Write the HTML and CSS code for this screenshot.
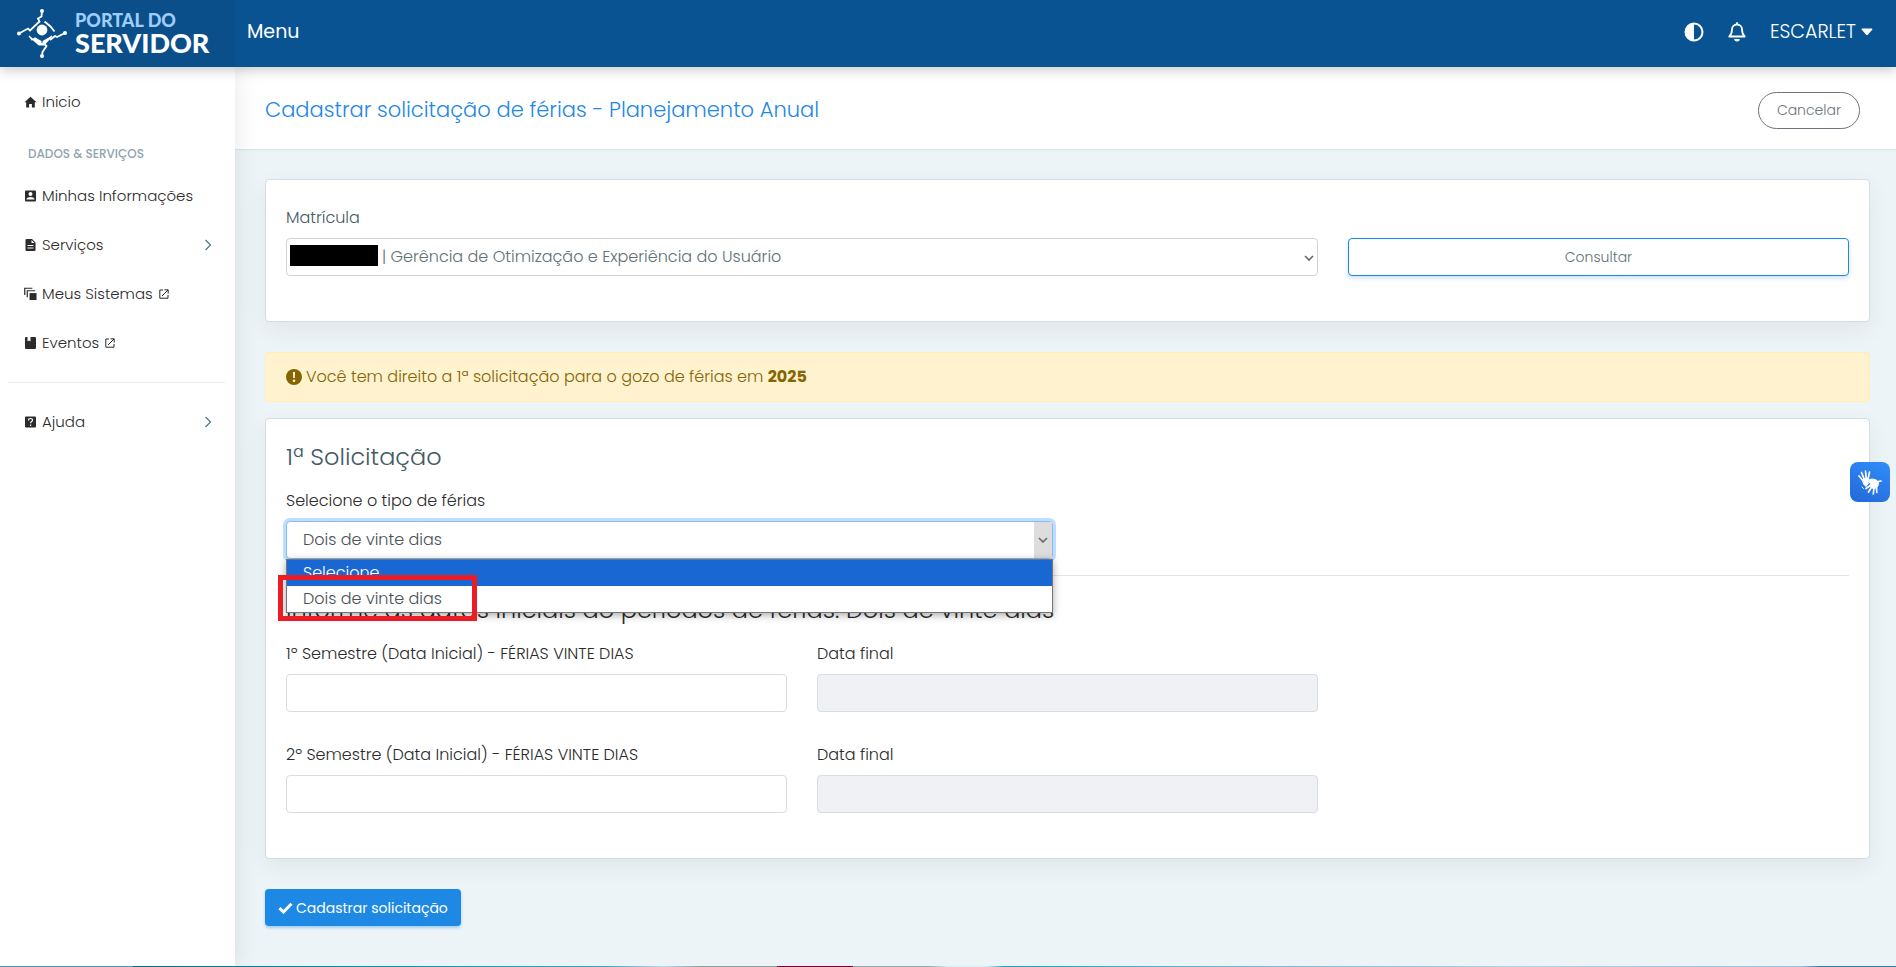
FILE: index.html
```html
<!DOCTYPE html>
<html lang="pt-BR">
<head>
<meta charset="utf-8">
<meta name="viewport" content="width=device-width, initial-scale=1">
<title>Portal do Servidor</title>
<link rel="stylesheet" href="styles.css">
</head>
<body>
<header class="topbar">
  <a class="brand" href="#">
    <svg class="brand-mark" width="52" height="52" viewBox="0 0 52 52" fill="none" stroke="#fff" stroke-width="1.8">
      <circle cx="26" cy="22" r="5.400" fill="#fff" stroke="none"/>
      <path d="M26 3l-.5 5.500-3.500 2 1.500 3-9.500 9-2-2L3 25.500M49 25l-8 4-2-1-5 4M26 48l.5-4 4-6-2-2M28.500 13.500l6 5 4 5"/>
      <path d="M13 28l3 4 3-2 7 4 7-4 3-2-8 9h-5z" fill="#fff" stroke-width="1.200"/>
      <path d="M26 28v7" stroke="#0b4f8a" stroke-width="1"/>
      <g fill="#fff" stroke="none"><circle cx="26" cy="3" r="2"/><circle cx="3" cy="25.500" r="2"/><circle cx="49" cy="25" r="2"/><circle cx="26" cy="48" r="2"/></g>
    </svg>
    <span class="brand-text"><span class="brand-top">PORTAL DO</span><span class="brand-main">SERVIDOR</span></span>
  </a>
  <button class="menu-button" type="button">Menu</button>
  <div class="topbar-actions">
    <button class="icon-button" type="button" aria-label="Contraste">
      <svg width="20" height="20" viewBox="0 0 20 20"><circle cx="10" cy="10" r="8.500" fill="none" stroke="#fff" stroke-width="2"/><path d="M10 1.500a8.500 8.500 0 0 0 0 17z" fill="#fff"/></svg>
    </button>
    <button class="icon-button" type="button" aria-label="Notificações">
      <svg width="20" height="20" viewBox="0 0 20 20" fill="none" stroke="#fff" stroke-width="1.800" stroke-linejoin="round"><path d="M10 2.500C6.800 2.500 5 5 5 7.500c0 3.500-.7 5-2.700 7h15.400c-2-2-2.700-3.500-2.700-7 0-2.500-1.800-5-5-5z"/><path d="M10 .3v2"/><path d="M7.300 17h5.400a2.700 2.500 0 0 1-5.400 0z" fill="#fff" stroke="none"/></svg>
    </button>
    <button class="user-button" type="button">ESCARLET <svg width="12" height="8" viewBox="0 0 12 8"><path d="M1.200.5h9.600q1.200.2.4 1.300L6.800 6.800q-.8.700-1.600 0L.8 1.800Q0 .7 1.200.5z" fill="#fff"/></svg></button>
  </div>
</header>

<div class="shell">
  <nav class="sidebar" aria-label="Principal">
    <a class="nav-item" href="#"><svg width="12" height="12" viewBox="0 0 12 12"><path d="M6 .8l6 5.400h-1.700V11.500H7.400V8H4.600v3.500H1.700V6.200H0z"/></svg>Inicio</a>
    <p class="nav-title">DADOS &amp; SERVIÇOS</p>
    <a class="nav-item" href="#"><svg width="12" height="12" viewBox="0 0 12 12"><path fill-rule="evenodd" d="M1.500.5h9q1 0 1 1v9q0 1-1 1h-9q-1 0-1-1v-9q0-1 1-1zM6 2a2 2 0 1 0 0 4 2 2 0 0 0 0-4zM2 9.500h8V9c0-1.300-2.600-2-4-2s-4 .7-4 2z"/></svg>Minhas Informações</a>
    <a class="nav-item" href="#"><svg width="12" height="12" viewBox="0 0 12 12"><path fill-rule="evenodd" d="M2 0h5.500L11 3.500V11q0 1-1 1H2q-1 0-1-1V1q0-1 1-1zm5 1v3h3zM3 6v1h6V6zm0 2.500v1h6v-1z"/></svg>Serviços<svg class="nav-arrow" width="8" height="12" viewBox="0 0 8 12"><path d="M1.500 1l5 5-5 5"/></svg></a>
    <a class="nav-item" href="#"><svg width="14" height="14" viewBox="0 0 14 14"><path d="M6 6h7.500v7.500H6z"/><path d="M3.500 10.500v-7H12M.8 8V.8H9" fill="none" stroke="#2b2b2b" stroke-width="1.300"/></svg>Meus Sistemas<svg class="nav-ext" width="10" height="10" viewBox="0 0 10 10"><path d="M4 1H.8v8.200H9V6M5.500.8H9.200v3.700M9 1L3 7"/></svg></a>
    <a class="nav-item" href="#"><svg width="12" height="12" viewBox="0 0 12 12"><path d="M1.500 0H3v4.500l1.500-1L6 4.500V0h4.500q1 0 1 1v10q0 1-1 1h-9q-1 0-1-1V1q0-1 1-1z"/></svg>Eventos<svg class="nav-ext" width="10" height="10" viewBox="0 0 10 10"><path d="M4 1H.8v8.200H9V6M5.500.8H9.200v3.700M9 1L3 7"/></svg></a>
    <hr class="nav-rule">
    <a class="nav-item" href="#"><svg width="12" height="12" viewBox="0 0 12 12"><rect x=".5" y=".5" width="11" height="11" rx="1"/><path d="M4 4.500q0-2 2-2t2 1.700c0 1.300-1.900 1.500-1.900 3M6.100 8.500V10" fill="none" stroke="#fff" stroke-width="1.200"/></svg>Ajuda<svg class="nav-arrow" width="8" height="12" viewBox="0 0 8 12"><path d="M1.500 1l5 5-5 5"/></svg></a>
  </nav>

  <main class="main">
    <div class="page-head">
      <h1 class="page-title">Cadastrar solicitação de férias - Planejamento Anual</h1>
      <button class="cancel-button" type="button">Cancelar</button>
    </div>
    <form class="content">
      <section class="card card-lookup">
        <label class="label label-soft" for="matricula">Matrícula</label>
        <div class="grid">
          <div class="select-box span-two">
            <select class="control select select-redacted" id="matricula"><option>| Gerência de Otimização e Experiência do Usuário</option></select>
            <span class="redaction"></span>
            <svg class="chevron" width="10" height="6" viewBox="0 0 10 6"><path d="M1 1l4 4 4-4"/></svg>
          </div>
          <button class="consult-button" type="button">Consultar</button>
        </div>
      </section>

      <p class="alert" role="alert"><svg width="16" height="16" viewBox="0 0 16 16"><circle cx="8" cy="8" r="8" fill="#856404"/><path d="M6.900 3h2.200l-.3 6H7.200z" fill="#fff3cd"/><circle cx="8" cy="11.700" r="1.300" fill="#fff3cd"/></svg><span>Você tem direito a 1ª solicitação para o gozo de férias em <strong>2025</strong></span></p>

      <section class="card card-request">
        <h2 class="card-title">1ª Solicitação</h2>
        <label class="label" for="tipo">Selecione o tipo de férias</label>
        <div class="halves">
          <div class="select-box">
            <select class="control select select-open" id="tipo"><option>Dois de vinte dias</option></select>
            <span class="chevron-pad"><svg width="10" height="6" viewBox="0 0 10 6"><path d="M1 1l4 4 4-4"/></svg></span>
            <ul class="options" role="listbox" aria-label="Tipo de férias">
              <li class="option option-active" role="option">Selecione</li>
              <li class="option" role="option">Dois de vinte dias</li>
            </ul>
            <span class="highlight"></span>
          </div>
        </div>
        <hr class="rule">
        <h3 class="section-title">Informe as datas iniciais do períodos de férias: Dois de vinte dias</h3>
        <div class="grid grid-dates">
          <div class="field"><label class="label" for="ini1">1º Semestre (Data Inicial) - FÉRIAS VINTE DIAS</label><input class="control" id="ini1" type="text"></div>
          <div class="field"><label class="label" for="fim1">Data final</label><input class="control" id="fim1" type="text" disabled></div>
        </div>
        <div class="grid grid-dates">
          <div class="field"><label class="label" for="ini2">2º Semestre (Data Inicial) - FÉRIAS VINTE DIAS</label><input class="control" id="ini2" type="text"></div>
          <div class="field"><label class="label" for="fim2">Data final</label><input class="control" id="fim2" type="text" disabled></div>
        </div>
      </section>

      <button class="submit-button" type="button"><svg width="15" height="12" viewBox="0 0 15 12"><path d="M1.500 6.200l4 3.800 8-8.200" fill="none" stroke="#fff" stroke-width="3"/></svg>Cadastrar solicitação</button>
    </form>
  </main>
</div>
<div class="bottom-strip"></div>

<button class="libras" type="button" aria-label="Acessível em Libras">
  <svg width="28" height="28" viewBox="0 0 28 28" fill="none" stroke="#fff" stroke-linecap="round" stroke-linejoin="round">
    <path d="M6.500 12L3 8M8 10.500L5.500 4.500M10.200 10L9.500 3M12.200 10.500L13.500 4" stroke-width="1.700"/>
    <path d="M6.500 11.500l5.500-1.500 1 2-2 2 1.500 1-2.500 3.500-2-2z" fill="#fff" stroke-width="1"/>
    <path d="M11.500 12.500l4-1.500 4 .5 3 2.500-.5 4-3 2.500-3-.5-2.500-2 1.500-3-2-.5z" fill="#fff" stroke-width="1"/>
    <path d="M15 17l-5 3.500M16 18.500L12.500 24M18 19.500L17.300 26M20.500 19l.3 5.500M22 13.500l3-.5" stroke-width="1.700"/>
    <path d="M6 19l1.500 1.500" stroke-width="1"/>
  </svg>
</button>
</body>
</html>
```
FILE: styles.css
```css
* { box-sizing: border-box; }

body {
  margin: 0;
  min-height: 100vh;
  display: flex;
  flex-direction: column;
  background: #ecf4f8;
  color: #2b2b2b;
  font-family: Poppins, Inter, "Open Sans", sans-serif;
  font-size: 16px;
  font-weight: 300;
  line-height: 24px;
}

button, input, select { font: inherit; }
button { cursor: pointer; }
h1, h2, h3, p, ul { margin: 0; }
a { color: inherit; text-decoration: none; }

.topbar {
  position: relative;
  z-index: 3;
  display: flex;
  align-items: center;
  height: 67px;
  background: #095393;
  box-shadow: 0 2px 12px rgba(0, 0, 0, 0.25);
}
.brand {
  display: flex;
  align-items: center;
  gap: 7px;
  width: 235px;
  height: 100%;
  padding-left: 16px;
  background: #0b4f8a;
}
.brand-text { display: flex; flex-direction: column; padding-bottom: 2px; font-family: Lato, sans-serif; }
.brand-top { color: #9fcdfb; font-size: 18px; font-weight: 900; line-height: 20px; }
.brand-main { color: #fff; font-size: 27px; font-weight: 900; line-height: 26px; }
.menu-button, .icon-button, .user-button {
  padding: 0;
  border: 0;
  background: none;
  color: #fff;
}
.menu-button { margin-left: 12px; padding-bottom: 3px; font-size: 19px; font-weight: 400; }
.topbar-actions {
  display: flex;
  align-items: center;
  gap: 23px;
  margin-left: auto;
  padding: 0 23px 4px 0;
}
.icon-button { display: flex; }
.user-button { display: flex; align-items: center; gap: 5px; font-size: 19px; }

.shell { display: flex; flex: 1; }
.sidebar {
  position: relative;
  z-index: 2;
  flex: none;
  width: 235px;
  padding-top: 10px;
  background: #fff;
  box-shadow: 0 0 24px rgba(0, 0, 0, 0.1);
}
.nav-item {
  display: flex;
  align-items: center;
  height: 49px;
  padding: 0 23px 0 24px;
  font-size: 15px;
}
.nav-item > svg { fill: #2b2b2b; flex: none; }
.nav-item > svg:first-child { width: 13px; margin-right: 5px; }
.nav-item > .nav-arrow { margin-left: auto; fill: none; stroke: #4d7186; stroke-width: 1.2; }
.nav-item > .nav-ext { margin-left: 6px; fill: none; stroke: #2b2b2b; stroke-width: 1; }
.nav-title {
  padding: 16px 28px 5px;
  color: #90a4ae;
  font-size: 12px;
  font-weight: 500;
}
.nav-rule { height: 1px; margin: 15px 10px 14px 8px; border: 0; background: #e9ecef; }

.main { flex: 1; min-width: 0; }
.page-head {
  display: flex;
  align-items: center;
  justify-content: space-between;
  height: 82px;
  padding: 4px 36px 0 30px;
  background: #fff;
  box-shadow: 0 1px 1px rgba(0, 0, 0, 0.06);
}
.page-title { color: #1e88e5; font-size: 21px; font-weight: 300; line-height: 28px; }
.cancel-button {
  height: 37px;
  padding: 0 18px;
  border: 1px solid #6c757d;
  border-radius: 19px;
  background: #fff;
  color: #6c757d;
  font-size: 14px;
}
.content { padding: 30px 26px 40px 30px; }

.card {
  padding: 24px 20px;
  border: 1px solid #d5dde2;
  border-radius: 4px;
  background: #fff;
  box-shadow: 0 8px 24px rgba(0, 0, 0, 0.06);
}
.card-lookup { padding: 26px 20px 45px; }
.label { display: block; margin-bottom: 8px; }
.label-soft { color: #455a64; }
.grid, .halves { display: grid; grid-template-columns: repeat(3, minmax(0, 1fr)); gap: 30px; }
.halves { grid-template-columns: repeat(2, minmax(0, 1fr)); }
.span-two { grid-column: span 2; }

.control {
  display: block;
  width: 100%;
  height: 38px;
  padding: 0 16px;
  border: 1px solid #d8dde3;
  border-radius: 4px;
  background: #fff;
  color: #495057;
}
.control:disabled { background: #eff1f4; }
.select-box { position: relative; }
.select { appearance: none; }
.select-redacted { padding-left: 95px; border-color: #ced4da; color: #607179; }
.redaction {
  position: absolute;
  top: 7px;
  left: 4px;
  width: 88px;
  height: 21px;
  background: #000;
}
.chevron, .chevron-pad svg { fill: none; stroke: #666; stroke-width: 1.6; }
.chevron { position: absolute; top: 17px; right: 4px; }
.select-open { border-color: #80bdff; box-shadow: 0 0 0 3px #bfdeff; }
.chevron-pad {
  position: absolute;
  top: 1px;
  right: 1px;
  display: flex;
  align-items: center;
  justify-content: center;
  width: 18px;
  height: 36px;
  background: #ddd;
}
.options {
  position: absolute;
  top: 100%;
  left: 0;
  right: 0;
  padding: 0;
  border: 1px solid #767676;
  background: #fff;
  box-shadow: 0 2px 8px rgba(0, 0, 0, 0.35);
  list-style: none;
}
.option { height: 26px; padding: 0 16px; color: #495057; line-height: 26px; }
.option-active { background: #1967d2; color: #fff; }
.highlight {
  position: absolute;
  top: 54px;
  left: -8px;
  width: 199px;
  height: 46px;
  border: 5px solid #ed1c24;
}

.consult-button {
  height: 38px;
  border: 1px solid #1e88e5;
  border-radius: 4px;
  background: #fff;
  box-shadow: 0 2px 4px rgba(30, 136, 229, 0.25);
  color: #607179;
  font-size: 14px;
}
.alert {
  display: flex;
  align-items: center;
  gap: 4px;
  height: 50px;
  margin: 30px 0 16px;
  padding: 0 20px;
  border: 1px solid #ffeeba;
  border-radius: 4px;
  background: #fff2ce;
  color: #856404;
}
.alert strong { font-weight: 700; }

.card-request { padding: 22px 20px 45px; }
.card-title { margin-bottom: 16px; color: #455a64; font-size: 24px; font-weight: 300; line-height: 32px; }
.rule { height: 1px; margin: 16px 0 18px; border: 0; background: #e3e5e7; }
.section-title { margin-bottom: 16px; font-size: 24px; font-weight: 300; line-height: 32px; }
.grid-dates + .grid-dates { margin-top: 31px; }

.submit-button {
  display: flex;
  align-items: center;
  gap: 3px;
  height: 37px;
  margin-top: 30px;
  padding: 0 13px;
  border: 0;
  border-radius: 4px;
  background: #1e88e5;
  box-shadow: 0 2px 3px rgba(30, 136, 229, 0.35);
  color: #fff;
  font-size: 14px;
  font-weight: 400;
}
.libras {
  position: fixed;
  z-index: 4;
  top: 462px;
  right: 6px;
  display: flex;
  align-items: center;
  justify-content: center;
  width: 40px;
  height: 40px;
  padding: 0;
  border: 0;
  border-radius: 8px;
  background: linear-gradient(25deg, #2268d8, #318ef8);
}
.bottom-strip {
  position: relative;
  z-index: 3;
  height: 1px;
  background: linear-gradient(90deg, #4b93c4 0 7%, #07688a 7%, #0b8fb3 20%, #3aa5cf 32%, #b5dbe6 35%, #8a9c9c 37% 41%, #7d0035 41% 45%, #8ea8aa 45% 49%, #d8eff5 50% 52%, #16a0c6 53%, #6ab8e0 65%, #a5d8e0 80%, #8cc4ee 95%, #2a7cb0 96%);
}
```
